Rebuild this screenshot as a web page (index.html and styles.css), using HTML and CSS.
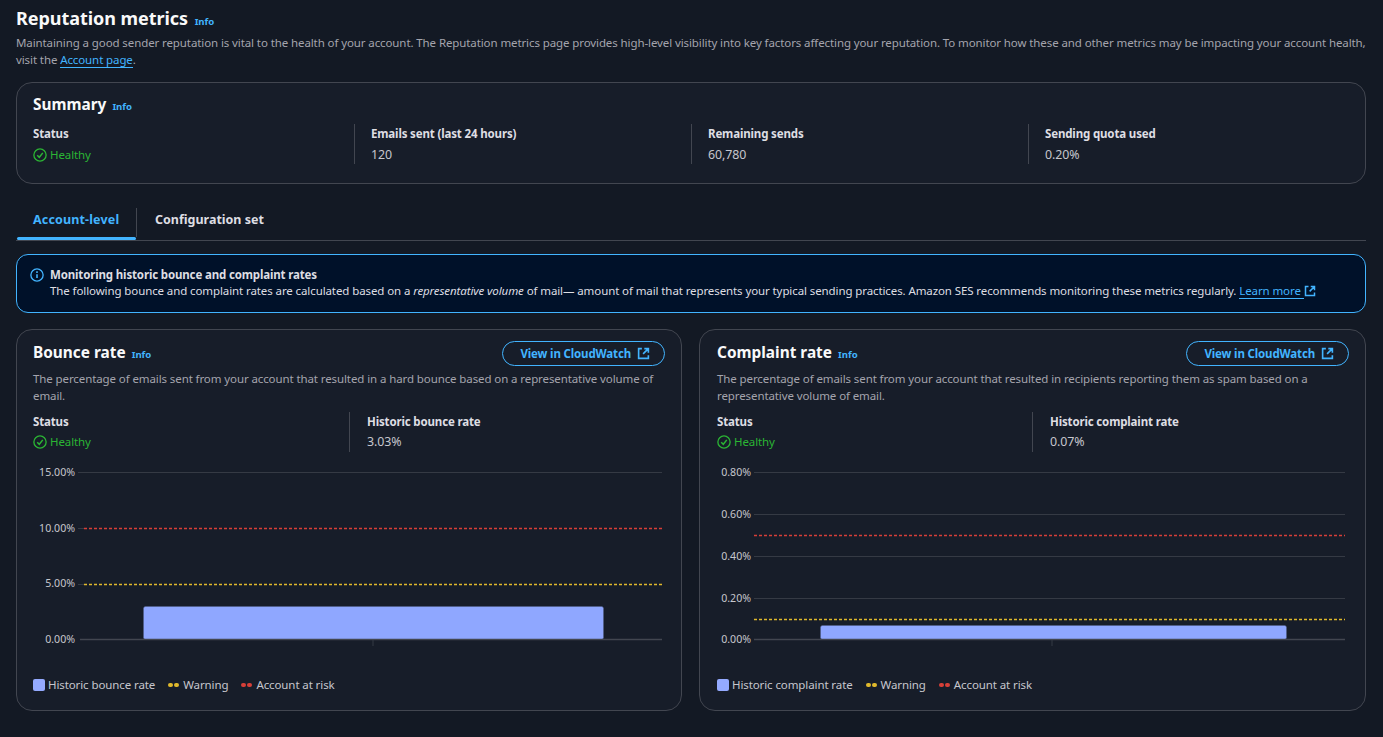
FILE: index.html
```html
<!DOCTYPE html>
<html lang="en">
<head>
<meta charset="utf-8">
<title>Reputation metrics</title>
<link rel="stylesheet" href="styles.css">
</head>
<body>
<svg class="defs" width="0" height="0" aria-hidden="true">
  <symbol id="ext" viewBox="0 0 16 16"><path d="M6 2H2v12h12v-4M9 2h5v5M14 2 7.500 8.500" fill="none" stroke="currentColor" stroke-width="2"/></symbol>
  <symbol id="ok" viewBox="0 0 16 16"><circle cx="8" cy="8" r="7" fill="none" stroke="currentColor" stroke-width="1.500"/><path d="M4.800 8.200 7.200 10.600 11.200 5.600" fill="none" stroke="currentColor" stroke-width="1.700"/></symbol>
</svg>
<main class="page">
  <header class="page-head">
    <h1 class="title">Reputation metrics <a class="info">Info</a></h1>
    <p class="desc">Maintaining a good sender reputation is vital to the health of your account. The Reputation metrics page provides high-level visibility into key factors affecting your reputation. To monitor how these and other metrics may be impacting your account health, visit the <a class="link">Account page</a>.</p>
  </header>

  <section class="card summary">
    <h2 class="card-title">Summary <a class="info">Info</a></h2>
    <div class="cols cols-4">
      <div class="col"><div class="label">Status</div><div class="healthy"><svg class="ok"><use href="#ok"/></svg>Healthy</div></div>
      <div class="col"><div class="label">Emails sent (last 24 hours)</div><div class="value">120</div></div>
      <div class="col"><div class="label">Remaining sends</div><div class="value">60,780</div></div>
      <div class="col"><div class="label">Sending quota used</div><div class="value">0.20%</div></div>
    </div>
  </section>

  <nav class="tabs">
    <a class="tab active">Account-level</a>
    <a class="tab">Configuration set</a>
  </nav>

  <section class="alert">
    <svg class="alert-icon" viewBox="0 0 16 16"><circle cx="8" cy="8" r="7" fill="none" stroke="currentColor" stroke-width="1.500"/><path d="M8 7v4.500M8 3.800v1.900" fill="none" stroke="currentColor" stroke-width="1.800"/></svg>
    <div class="alert-body">
      <div class="alert-title">Monitoring historic bounce and complaint rates</div>
      <div>The following bounce and complaint rates are calculated based on a <em>representative volume</em> of mail— amount of mail that represents your typical sending practices. Amazon SES recommends monitoring these metrics regularly. <a class="link">Learn more </a><svg class="ext-inline"><use href="#ext"/></svg></div>
    </div>
  </section>

  <div class="charts">
    <section class="card chart-card">
      <div class="chart-head">
        <h2 class="card-title">Bounce rate <a class="info">Info</a></h2>
        <a class="btn">View in CloudWatch <svg class="ext"><use href="#ext"/></svg></a>
      </div>
      <p class="card-desc">The percentage of emails sent from your account that resulted in a hard bounce based on a representative volume of email.</p>
      <div class="cols cols-2">
        <div class="col"><div class="label">Status</div><div class="healthy"><svg class="ok"><use href="#ok"/></svg>Healthy</div></div>
        <div class="col"><div class="label">Historic bounce rate</div><div class="value">3.03%</div></div>
      </div>
      <svg class="plot" viewBox="0 0 632 190" width="632" height="190">
        <g class="ax">
          <text x="42" y="8" >15.00%</text>
          <text x="42" y="64">10.00%</text>
          <text x="42" y="119">5.00%</text>
          <text x="42" y="175">0.00%</text>
        </g>
        <path class="grid" d="M45 4.500H629"/>
        <path class="grid" d="M45 60.500H51M45 116.500H51"/>
        <path class="risk" d="M51 60.500H629"/>
        <path class="warn" d="M51 116.500H629"/>
        <rect class="bar" x="110.500" y="138.500" width="460" height="33" rx="2"/>
        <path class="axis" d="M47 171.500H629"/>
        <path class="grid" d="M340 172v6"/>
      </svg>
      <div class="legend">
        <span class="lg"><i class="sw"></i>Historic bounce rate</span>
        <span class="lg"><i class="dots warn-d"></i>Warning</span>
        <span class="lg"><i class="dots risk-d"></i>Account at risk</span>
      </div>
    </section>

    <section class="card chart-card">
      <div class="chart-head">
        <h2 class="card-title">Complaint rate <a class="info">Info</a></h2>
        <a class="btn">View in CloudWatch <svg class="ext"><use href="#ext"/></svg></a>
      </div>
      <p class="card-desc">The percentage of emails sent from your account that resulted in recipients reporting them as spam based on a representative volume of email.</p>
      <div class="cols cols-2">
        <div class="col"><div class="label">Status</div><div class="healthy"><svg class="ok"><use href="#ok"/></svg>Healthy</div></div>
        <div class="col"><div class="label">Historic complaint rate</div><div class="value">0.07%</div></div>
      </div>
      <svg class="plot" viewBox="0 0 632 190" width="632" height="190">
        <g class="ax">
          <text x="34" y="8">0.80%</text>
          <text x="34" y="50">0.60%</text>
          <text x="34" y="92">0.40%</text>
          <text x="34" y="134">0.20%</text>
          <text x="34" y="175">0.00%</text>
        </g>
        <path class="grid" d="M37 4.500H628M37 46.500H628M37 88.500H628M37 130.500H628"/>
        <path class="risk" d="M37 67.500H628"/>
        <path class="warn" d="M37 151.500H628"/>
        <rect class="bar" x="103.500" y="157.500" width="466" height="14" rx="2"/>
        <path class="axis" d="M37 171.500H628"/>
        <path class="grid" d="M335 172v6"/>
      </svg>
      <div class="legend">
        <span class="lg"><i class="sw"></i>Historic complaint rate</span>
        <span class="lg"><i class="dots warn-d"></i>Warning</span>
        <span class="lg"><i class="dots risk-d"></i>Account at risk</span>
      </div>
    </section>
  </div>
</main>
</body>
</html>
```
FILE: styles.css
```css
* { box-sizing: border-box; }
html, body { margin: 0; height: 100%; }
body {
  background: #131924;
  color: #c6c6cd;
  font-family: "Noto Sans", "Open Sans", sans-serif;
  font-size: 11.500px;
  letter-spacing: -0.100px;
  line-height: 16px;
  overflow: hidden;
}
.defs { position: absolute; }
.page { padding: 6px 17px 0 16px; }
a { color: #42b4ff; }
h1, h2, p { margin: 0; }
.title { font-size: 18px; letter-spacing: -0.050px; line-height: 25px; font-weight: 700; color: #f9f9fa; }
.info { font-size: 9.600px; letter-spacing: 0; font-weight: 700; margin-left: 2px; }
.desc { color: #a4a4ad; line-height: 17px; }
.link { border-bottom: 1px solid #42b4ff; }
.card {
  background: #171d29;
  border: 1px solid #424650;
  border-radius: 16px;
}
.summary { margin-top: 14px; height: 102px; padding: 8px 16px; }
.card-title { font-size: 15.400px; letter-spacing: 0; line-height: 28px; font-weight: 700; color: #f9f9fa; }
.cols { display: grid; }
.cols-4 { grid-template-columns: 321px 337px 337px 1fr; margin-top: 3px; }
.cols-4 .value, .cols-4 .healthy { margin-top: 1px; }
.cols-2 { grid-template-columns: 316px 1fr; }
.col { height: 40px; padding-left: 16px; border-left: 1px solid #424650; }
.cols-2 .col { padding-left: 17px; }
.col:first-child, .cols-2 .col:first-child { padding-left: 0; border-left: 0; }
.label { font-weight: 700; letter-spacing: -0.150px; color: #dedee3; line-height: 20px; }
.value { color: #c6c6cd; font-size: 12.400px; line-height: 20px; }
.healthy { display: flex; align-items: center; color: #2bb534; line-height: 20px; }
.ok { width: 14px; height: 14px; margin-right: 3px; }
.tabs { display: flex; align-items: stretch; height: 33px; margin-top: 24px; border-bottom: 1px solid #424650; }
.tab { display: block; padding: 4px 17px 0; font-size: 12.500px; letter-spacing: 0; font-weight: 700; color: #dedee3; position: relative; white-space: nowrap; }
.tab:first-child { width: 121px; border-right: 1px solid #424650; margin-bottom: 3px; }
.tab:last-child { padding-left: 18px; }
.tab.active { color: #42b4ff; letter-spacing: 0.150px; }
.tab.active::after { content: ""; position: absolute; left: 1px; right: 0; bottom: -3px; height: 3px; background: #42b4ff; border-radius: 2px; }
.alert {
  margin-top: 13px; height: 59px; display: flex; gap: 6px; padding: 12px 13px;
  background: #001129; border: 1px solid #42b4ff; border-radius: 12px; color: #dedee3; line-height: 16px;
}
.alert-icon { width: 14px; height: 14px; flex: none; color: #42b4ff; margin-top: 1px; }
.alert-title { font-weight: 700; letter-spacing: -0.150px; }
.ext-inline { width: 12px; height: 12px; color: #42b4ff; vertical-align: -2px; }
.charts { display: grid; grid-template-columns: 666px 667px; gap: 17px; margin-top: 16px; }
.chart-card { height: 382px; padding: 9px 16px; }
.chart-card + .chart-card { padding-left: 17px; }
.chart-card + .chart-card .cols-2 { grid-template-columns: 315px 1fr; }
.chart-head { display: flex; justify-content: space-between; align-items: flex-start; }
.btn {
  display: flex; align-items: center; gap: 6px; height: 25px; padding: 0 14px 0 17px; margin-top: 2px;
  border: 1px solid #42b4ff; border-radius: 13px; font-weight: 700; letter-spacing: -0.150px; white-space: nowrap;
}
.ext { width: 13px; height: 13px; }
.card-desc { color: #a4a4ad; margin-top: 1px; line-height: 17px; }
.chart-card .cols-2 { margin-top: 8px; }
.plot { display: block; margin-top: 16px; overflow: visible; }
.ax text { fill: #c6c6cd; font: 10.600px "Noto Sans", sans-serif; letter-spacing: 0; text-anchor: end; }
.grid { stroke: #353a44; stroke-width: 1; fill: none; }
.axis { stroke: #424650; stroke-width: 1.500; fill: none; }
.risk { stroke: #d63f38; stroke-width: 1.500; stroke-dasharray: 3 2; fill: none; }
.warn { stroke: #e0b92c; stroke-width: 1.500; stroke-dasharray: 3 2; fill: none; }
.bar { fill: #8fa7ff; stroke: #4e5a80; stroke-width: .5; }
.legend { display: flex; gap: 13px; margin-top: 19px; color: #c6c6cd; }
.lg { display: flex; align-items: center; }
.sw { width: 12px; height: 12px; background: #94aaff; border-radius: 2px; margin-right: 3px; }
.dots { display: flex; gap: 1px; margin-right: 4px; }
.dots::before, .dots::after { content: ""; width: 5px; height: 4px; border-radius: 2px; background: currentColor; }
.warn-d { color: #e0b92c; }
.risk-d { color: #d63f38; }
```
